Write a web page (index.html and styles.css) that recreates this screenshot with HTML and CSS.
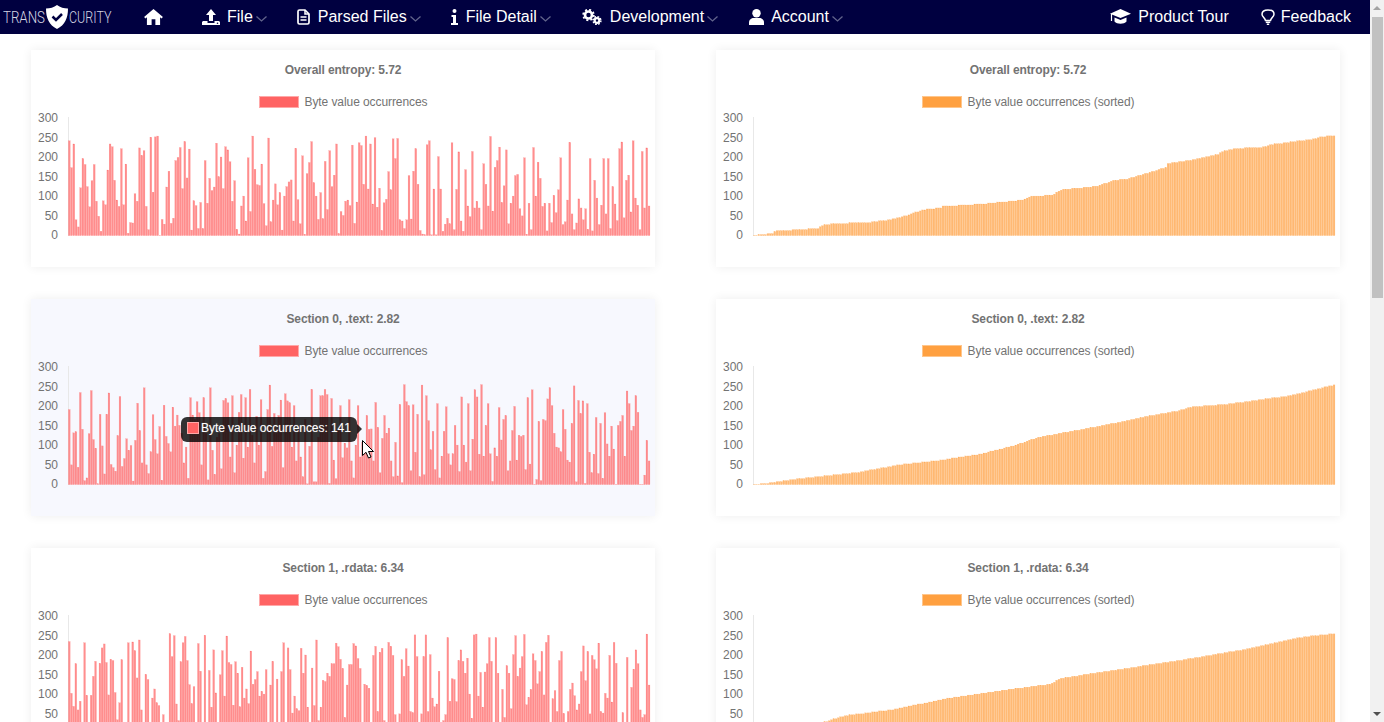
FILE: index.html
```html
<!DOCTYPE html>
<html lang="en">
<head>
  <meta charset="UTF-8">
  <title>Transcurity - Entropy</title>
  <link rel="stylesheet" href="styles.css">
</head>
<body>
  <div class="page">
    <nav class="navbar">
      <div class="logo">
        <span class="logo-start">TRANS</span>
        <svg class="logo-shield" viewBox="0 0 22 24"><path d="M11 0 C14 2.500 18 3.500 22 3.500 C22 13 19 20 11 24 C3 20 0 13 0 3.500 C4 3.500 8 2.500 11 0Z" fill="#fff"/><path d="M6.500 11.500 L10 15 L16 9" fill="none" stroke="#000040" stroke-width="2.500"/></svg>
        <span class="logo-end">CURITY</span>
      </div>
      <a class="nav-item nav-home">
        <svg class="icon" width="19" height="16" viewBox="0 0 20 17"><path d="M10 0 L20 8.500 L18.500 10 L17 8.700 V17 H12 V11 H8 V17 H3 V8.700 L1.500 10 L0 8.500Z" fill="#fff"/></svg>
      </a>
      <a class="nav-item">
        <svg class="icon icon-tight" width="18" height="16" viewBox="0 0 18 16"><path d="M9 0 L14 6 H11 V12 H7 V6 H4Z" fill="#fff"/><path d="M1 12 H5.500 V14 H12.500 V12 H17 L18 13 V16 H0 V13Z" fill="#fff"/><circle cx="15.500" cy="14.300" r=".8" fill="#000040"/></svg>
        <span>File</span>
        <svg class="chevron" viewBox="0 0 11 6"><path d="M.5 .5 L5.500 5 L10.500 .5" fill="none" stroke="#62648c" stroke-width="1.300"/></svg>
      </a>
      <a class="nav-item">
        <svg class="icon" width="13" height="16" viewBox="0 0 13 16"><path d="M1 2.500 Q1 1 2.500 1 H8 L12 5 V13.500 Q12 15 10.500 15 H2.500 Q1 15 1 13.500Z" fill="none" stroke="#fff" stroke-width="1.700"/><path d="M3.500 8 H9.500 M3.500 11 H9.500 M8 1 V5 H12" fill="none" stroke="#fff" stroke-width="1.500"/></svg>
        <span>Parsed Files</span>
        <svg class="chevron" viewBox="0 0 11 6"><path d="M.5 .5 L5.500 5 L10.500 .5" fill="none" stroke="#62648c" stroke-width="1.300"/></svg>
      </a>
      <a class="nav-item nav-wide">
        <svg class="icon" width="7" height="16" viewBox="0 0 7 16"><circle cx="3.500" cy="2" r="2" fill="#fff"/><path d="M.5 6 H5 V14 H7 V16 H0 V14 H2 V8 H.5Z" fill="#fff"/></svg>
        <span>File Detail</span>
        <svg class="chevron" viewBox="0 0 11 6"><path d="M.5 .5 L5.500 5 L10.500 .5" fill="none" stroke="#62648c" stroke-width="1.300"/></svg>
      </a>
      <a class="nav-item nav-wide">
        <svg class="icon" width="20" height="16" viewBox="0 0 20 16"><circle cx="6.500" cy="6" r="3.500" fill="none" stroke="#fff" stroke-width="2.600"/><circle cx="6.500" cy="6" r="5.300" fill="none" stroke="#fff" stroke-width="1.800" stroke-dasharray="2 2.160"/><circle cx="15" cy="11.500" r="2.300" fill="none" stroke="#fff" stroke-width="2.200"/><circle cx="15" cy="11.500" r="3.900" fill="none" stroke="#fff" stroke-width="1.500" stroke-dasharray="1.700 1.360"/></svg>
        <span>Development</span>
        <svg class="chevron" viewBox="0 0 11 6"><path d="M.5 .5 L5.500 5 L10.500 .5" fill="none" stroke="#62648c" stroke-width="1.300"/></svg>
      </a>
      <a class="nav-item">
        <svg class="icon icon-tight" width="15" height="16" viewBox="0 0 15 16"><circle cx="7.500" cy="4.200" r="4.200" fill="#fff"/><path d="M0 16 V13.500 C0 10.500 2.500 9 4.500 9 H10.500 C12.500 9 15 10.500 15 13.500 V16Z" fill="#fff"/></svg>
        <span>Account</span>
        <svg class="chevron" viewBox="0 0 11 6"><path d="M.5 .5 L5.500 5 L10.500 .5" fill="none" stroke="#62648c" stroke-width="1.300"/></svg>
      </a>
      <div class="nav-right">
        <a class="nav-item">
          <svg class="icon icon-tight" width="21" height="16" viewBox="0 0 21 16"><path d="M10.500 0 L21 4.800 L10.500 9 L0 4.800Z" fill="#fff"/><path d="M4.500 8.500 L10.500 11 L16.500 8.500 V12.500 C14 15.500 7 15.500 4.500 12.500Z" fill="#fff"/><path d="M1.500 5 V12" stroke="#fff" stroke-width="1.200"/></svg>
          <span>Product Tour</span>
        </a>
        <a class="nav-item">
          <svg class="icon icon-bulb" width="14" height="16" viewBox="0 0 14 16"><path d="M4.500 11.500 C4 9 1 7.800 1 5.200 C1 2.500 3.500 .9 7 .9 C10.500 .9 13 2.500 13 5.200 C13 7.800 10 9 9.500 11.500Z" fill="none" stroke="#fff" stroke-width="1.500"/><path d="M4.800 13.300 H9.200 M5.800 15.200 H8.200" stroke="#fff" stroke-width="1.500"/></svg>
          <span>Feedback</span>
        </a>
      </div>
    </nav>

    <main class="chart-grid">
      <section class="card">
        <h4 class="chart-title">Overall entropy: 5.72</h4>
        <div class="legend"><i class="swatch swatch-red"></i>Byte value occurrences</div>
        <div class="chart-row">
          <div class="y-axis"><span>300</span><span>250</span><span>200</span><span>150</span><span>100</span><span>50</span><span>0</span></div>
          <svg class="plot" id="chart0"></svg>
        </div>
      </section>
      <section class="card">
        <h4 class="chart-title">Overall entropy: 5.72</h4>
        <div class="legend"><i class="swatch swatch-orange"></i>Byte value occurrences (sorted)</div>
        <div class="chart-row">
          <div class="y-axis"><span>300</span><span>250</span><span>200</span><span>150</span><span>100</span><span>50</span><span>0</span></div>
          <svg class="plot" id="chart1"></svg>
        </div>
      </section>
      <section class="card card-hover">
        <h4 class="chart-title">Section 0, .text: 2.82</h4>
        <div class="legend"><i class="swatch swatch-red"></i>Byte value occurrences</div>
        <div class="chart-row">
          <div class="y-axis"><span>300</span><span>250</span><span>200</span><span>150</span><span>100</span><span>50</span><span>0</span></div>
          <svg class="plot" id="chart2"></svg>
        </div>
        <div class="tooltip"><i class="swatch-tip"></i>Byte value occurrences: 141</div>
        <svg class="cursor" width="13" height="19" viewBox="0 0 13 19"><path d="M.5 .5 V15.500 L4 12.300 L6.500 18 L9 17 L6.500 11.500 H11.500Z" fill="#fff" stroke="#000" stroke-width="1"/></svg>
      </section>
      <section class="card">
        <h4 class="chart-title">Section 0, .text: 2.82</h4>
        <div class="legend"><i class="swatch swatch-orange"></i>Byte value occurrences (sorted)</div>
        <div class="chart-row">
          <div class="y-axis"><span>300</span><span>250</span><span>200</span><span>150</span><span>100</span><span>50</span><span>0</span></div>
          <svg class="plot" id="chart3"></svg>
        </div>
      </section>
      <section class="card">
        <h4 class="chart-title">Section 1, .rdata: 6.34</h4>
        <div class="legend"><i class="swatch swatch-red"></i>Byte value occurrences</div>
        <div class="chart-row">
          <div class="y-axis"><span>300</span><span>250</span><span>200</span><span>150</span><span>100</span><span>50</span><span>0</span></div>
          <svg class="plot" id="chart4"></svg>
        </div>
      </section>
      <section class="card">
        <h4 class="chart-title">Section 1, .rdata: 6.34</h4>
        <div class="legend"><i class="swatch swatch-orange"></i>Byte value occurrences (sorted)</div>
        <div class="chart-row">
          <div class="y-axis"><span>300</span><span>250</span><span>200</span><span>150</span><span>100</span><span>50</span><span>0</span></div>
          <svg class="plot" id="chart5"></svg>
        </div>
      </section>
    </main>
  </div>

  <div class="scrollbar">
    <div class="arrow-up"></div>
    <div class="thumb"></div>
    <div class="arrow-down"></div>
  </div>

  <script src="charts.js"></script>
</body>
</html>
```

FILE: styles.css
```css
html, body {
  margin: 0;
  height: 100%;
  overflow: hidden;
}
body {
  display: flex;
  background-color: #fff;
  font-family: "Liberation Sans", Arial, sans-serif;
}
.page {
  flex: 1;
  min-width: 0;
  overflow: hidden;
}

.navbar {
  display: flex;
  align-items: center;
  height: 34px;
  padding-left: 3px;
  padding-right: 19px;
  background-color: #000040;
  color: #fff;
  font-size: 16px;
}
.logo {
  display: flex;
  align-items: center;
  width: 110px;
  margin-right: 31px;
  font-family: Roboto, sans-serif;
  font-weight: 300;
  font-size: 16px;
  color: #d5d5e2;
  white-space: nowrap;
}
.logo-shield {
  width: 22px;
  height: 24px;
  flex: none;
}
/* the logo lettering is a narrow face, squeeze it */
.logo-start, .logo-end {
  display: inline-block;
  transform-origin: left center;
}
.logo-start {
  width: 43px;
  transform: scaleX(0.83);
}
.logo-end {
  width: 44px;
  margin-left: 1px;
  transform: scaleX(0.78);
}
.nav-item {
  display: flex;
  align-items: center;
  margin-right: 30px;
  white-space: nowrap;
}
.nav-home {
  margin-right: 39px;
}
.nav-wide {
  margin-right: 31px;
}
.icon {
  margin-right: 8px;
  flex: none;
}
.nav-home .icon {
  margin-right: 0;
}
.icon-tight {
  margin-right: 7px;
}
.icon-bulb {
  margin-right: 6px;
}
.chevron {
  width: 11px;
  height: 6px;
  margin-left: 3px;
  margin-top: 3px;
}
.nav-right {
  display: flex;
  margin-left: auto;
}
.nav-right .nav-item {
  margin-right: 0;
  margin-left: 32px;
}

.chart-grid {
  display: grid;
  grid-template-columns: 624px 624px;
  column-gap: 61px;
  row-gap: 32px;
  padding: 16px 0 0 31px;
}
.card {
  position: relative;
  height: 217px;
  padding-top: 13px;
  box-sizing: border-box;
  background-color: #fff;
  box-shadow: 0 0 10px rgba(0, 0, 0, 0.07);
  color: #737373;
  font-size: 12px;
}
.card-hover {
  background-color: #f7f8fe;
}
.chart-title {
  margin: 0;
  line-height: 14px;
  font-size: 12px;
  font-weight: bold;
  letter-spacing: -0.1px;
  text-align: center;
}
.legend {
  display: flex;
  align-items: center;
  justify-content: center;
  margin-top: 18px;
  line-height: 14px;
  letter-spacing: -0.08px;
}
.swatch {
  width: 38px;
  height: 10px;
  margin-right: 6px;
  border: 1px solid;
}
.swatch-red {
  background-color: #ff6363;
  border-color: #ffa8a8;
}
.swatch-orange {
  background-color: #ffa040;
  border-color: #ffc68c;
}
.chart-row {
  display: flex;
  margin-top: 1px;
}
.y-axis {
  display: flex;
  flex-direction: column;
  justify-content: space-between;
  width: 27px;
  height: 132px;
  padding-top: 1px;
  line-height: 14px;
  text-align: right;
  box-sizing: border-box;
}
.plot {
  width: 586px;
  height: 119px;
  margin: 7px 0 0 10px;
  display: block;
}

.tooltip {
  position: absolute;
  left: 150px;
  top: 118px;
  display: flex;
  align-items: center;
  width: 176px;
  height: 25px;
  padding-left: 6px;
  padding-bottom: 3px;
  box-sizing: border-box;
  background-color: rgba(0, 0, 0, 0.8);
  border-radius: 6px;
  color: #fff;
  font-size: 12px;
  letter-spacing: -0.06px;
  text-shadow: 0 0 1px rgba(255, 255, 255, 0.4);
  white-space: nowrap;
}
.tooltip::after {
  content: "";
  position: absolute;
  right: -5px;
  top: 7px;
  border-left: 5px solid rgba(0, 0, 0, 0.8);
  border-top: 5px solid transparent;
  border-bottom: 5px solid transparent;
}
.swatch-tip {
  width: 10px;
  height: 10px;
  margin-right: 2px;
  background-color: #ff6363;
  border: 1px solid #ffa8a8;
}
.cursor {
  position: absolute;
  left: 331px;
  top: 141px;
}

.scrollbar {
  position: relative;
  flex: none;
  width: 14px;
  background-color: #f1f1f1;
}
.thumb {
  position: absolute;
  left: 2px;
  right: 1px;
  top: 17px;
  height: 281px;
  background-color: #c1c1c1;
}
.arrow-up, .arrow-down {
  position: absolute;
  left: 3px;
  border-left: 4px solid transparent;
  border-right: 4px solid transparent;
}
.arrow-up {
  top: 6px;
  border-bottom: 4px solid #a3a3a3;
}
.arrow-down {
  bottom: 6px;
  border-top: 4px solid #505050;
}
```

FILE: charts.js
```js
// bar heights read off the page, one value per byte
const chart0 = [240,172,232,40,22,121,195,180,124,73,139,180,87,49,11,88,78,166,232,225,140,90,74,220,78,181,6,33,32,106,87,222,203,215,74,15,249,110,250,252,1,41,29,123,163,31,44,190,198,223,119,238,146,219,14,88,76,18,84,18,190,82,145,114,123,234,149,199,119,225,217,187,87,139,16,4,75,100,37,197,61,252,168,129,127,181,81,25,247,35,90,131,78,109,14,100,124,136,141,37,221,91,30,202,3,157,185,238,134,100,41,109,43,188,66,215,124,153,232,5,61,51,87,90,76,229,31,85,
  235,228,130,252,118,232,80,248,72,120,13,83,92,162,116,245,195,246,40,37,18,40,152,42,163,220,130,13,4,2,230,240,2,118,2,200,118,11,29,44,30,235,15,117,212,37,11,167,75,48,213,70,87,70,15,182,130,75,251,62,173,190,224,84,126,217,30,82,100,152,155,68,50,197,3,82,15,223,100,186,145,74,82,12,82,33,102,58,116,197,28,35,90,236,55,15,32,93,70,40,68,16,195,12,140,95,28,77,195,55,195,18,124,80,38,220,237,45,140,153,60,240,95,77,15,213,70,222,75];

const chart2 = [190,50,131,134,44,233,140,10,17,129,238,114,92,2,178,98,27,178,232,51,43,34,124,223,46,66,116,87,99,9,112,206,137,55,245,50,28,83,177,114,78,147,11,201,122,104,83,196,148,176,150,130,55,95,16,220,176,165,210,182,50,220,130,12,245,87,26,120,130,40,213,218,207,70,225,30,100,183,228,67,220,95,241,125,55,173,100,215,16,33,190,252,97,180,130,175,214,43,230,212,207,95,200,60,140,70,20,165,2,97,241,7,7,120,225,225,241,228,3,218,62,15,140,200,68,105,93,215,
  60,17,100,200,70,107,95,175,140,141,60,208,145,30,117,175,130,143,60,20,107,22,203,5,253,210,200,35,202,82,178,20,252,25,225,162,88,135,38,205,17,72,135,197,78,50,78,150,100,33,222,100,57,205,35,115,240,222,77,253,72,150,205,78,8,93,72,195,113,165,175,35,60,137,198,62,125,122,125,38,220,52,240,1,13,160,10,165,162,217,245,200,130,95,93,83,190,140,62,57,155,250,7,213,180,212,3,205,82,30,77,170,28,155,16,182,103,72,148,90,1,150,160,175,72,237,205,137,148,225,183,1,1,24,112,60];

const chart4 = [233,102,69,177,60,82,2,230,97,1,97,145,183,1,178,217,227,180,98,188,185,104,35,78,187,5,1,230,1,232,210,141,237,60,1,150,137,1,90,113,78,71,1,48,1,1,253,195,248,75,33,182,230,246,185,124,76,119,1,228,158,1,249,1,160,67,212,103,1,149,210,95,247,180,175,72,182,153,68,168,90,113,76,209,125,137,157,95,107,100,162,1,123,183,1,138,1,157,230,1,217,162,52,95,63,58,216,153,199,67,1,166,71,237,33,67,135,132,153,145,177,177,229,220,188,165,41,123,
  175,175,228,222,190,165,15,125,122,115,20,198,221,56,206,216,33,0,231,221,198,48,0,50,187,145,215,171,56,53,250,195,0,50,195,250,56,200,90,68,75,158,0,33,48,243,82,139,137,81,185,212,183,153,191,100,39,250,252,95,155,67,156,177,243,183,0,243,153,0,112,41,172,153,63,200,248,145,166,195,251,73,92,112,202,185,126,157,208,98,231,249,0,88,109,56,185,208,51,0,56,112,128,96,60,75,157,222,134,208,50,198,187,164,229,56,52,102,90,198,80,231,178,0,0,53,0,193,0,117,163,212,177,60,41,48,252,123];

// control points of the sorted series: [index, value]
const sorted1 = [[0,0],[2,2],[8,5],[9,11],[28,18],[30,26],[35,30],[50,33],[60,40],[63,44],[68,52],[70,57],[75,66],[82,70],[83,74],[100,80],[118,90],[122,100],[131,102],[133,110],[135,116],[151,125],[158,140],[164,143],[174,160],[181,173],[182,182],[194,193],[204,205],[206,213],[212,220],[224,224],[227,230],[238,238],[247,245],[249,250],[255,253]];
const sorted3 = [[0,0],[4,2],[20,15],[45,30],[64,50],[80,60],[100,78],[115,100],[125,120],[152,148],[175,175],[187,187],[192,196],[209,204],[236,225],[250,245],[255,252]];
const sorted5 = [[0,0],[20,10],[40,45],[60,60],[86,90],[110,110],[130,125],[135,140],[152,155],[187,185],[218,215],[240,243],[255,253]];

function expand(points) {
  const out = [];
  let p = 0;
  for (let i = 0; i < 256; i++) {
    while (p < points.length - 2 && points[p + 1][0] < i) p++;
    const a = points[p], b = points[p + 1];
    const v = a[1] + (b[1] - a[1]) * (i - a[0]) / (b[0] - a[0]);
    out.push(Math.max(1, Math.round(v / 2.5) * 2.5));
  }
  return out;
}

function drawBars(id, values, fill, edge) {
  const svg = document.getElementById(id);
  const h = 118.6;
  const pitch = 582 / values.length;
  let html = '<line x1="0.5" y1="0" x2="0.5" y2="119" stroke="#e8e8e8"/>';
  values.forEach((v, i) => {
    const barH = v * 0.395;
    const x = 0.4 + i * pitch;
    html += `<rect x="${x.toFixed(2)}" y="${(h - barH).toFixed(2)}" width="${(pitch * 0.8).toFixed(2)}" height="${barH.toFixed(2)}" fill="${fill}" stroke="${edge}" stroke-width="0.3"/>`;
  });
  svg.innerHTML = html;
}

const red = "rgba(255,99,99,0.72)", redEdge = "rgba(255,99,99,0.5)";
const orange = "rgba(255,160,64,0.72)", orangeEdge = "rgba(255,160,64,0.5)";
drawBars("chart0", chart0, red, redEdge);
drawBars("chart1", expand(sorted1), orange, orangeEdge);
drawBars("chart2", chart2, red, redEdge);
drawBars("chart3", expand(sorted3), orange, orangeEdge);
drawBars("chart4", chart4, red, redEdge);
drawBars("chart5", expand(sorted5), orange, orangeEdge);
```
